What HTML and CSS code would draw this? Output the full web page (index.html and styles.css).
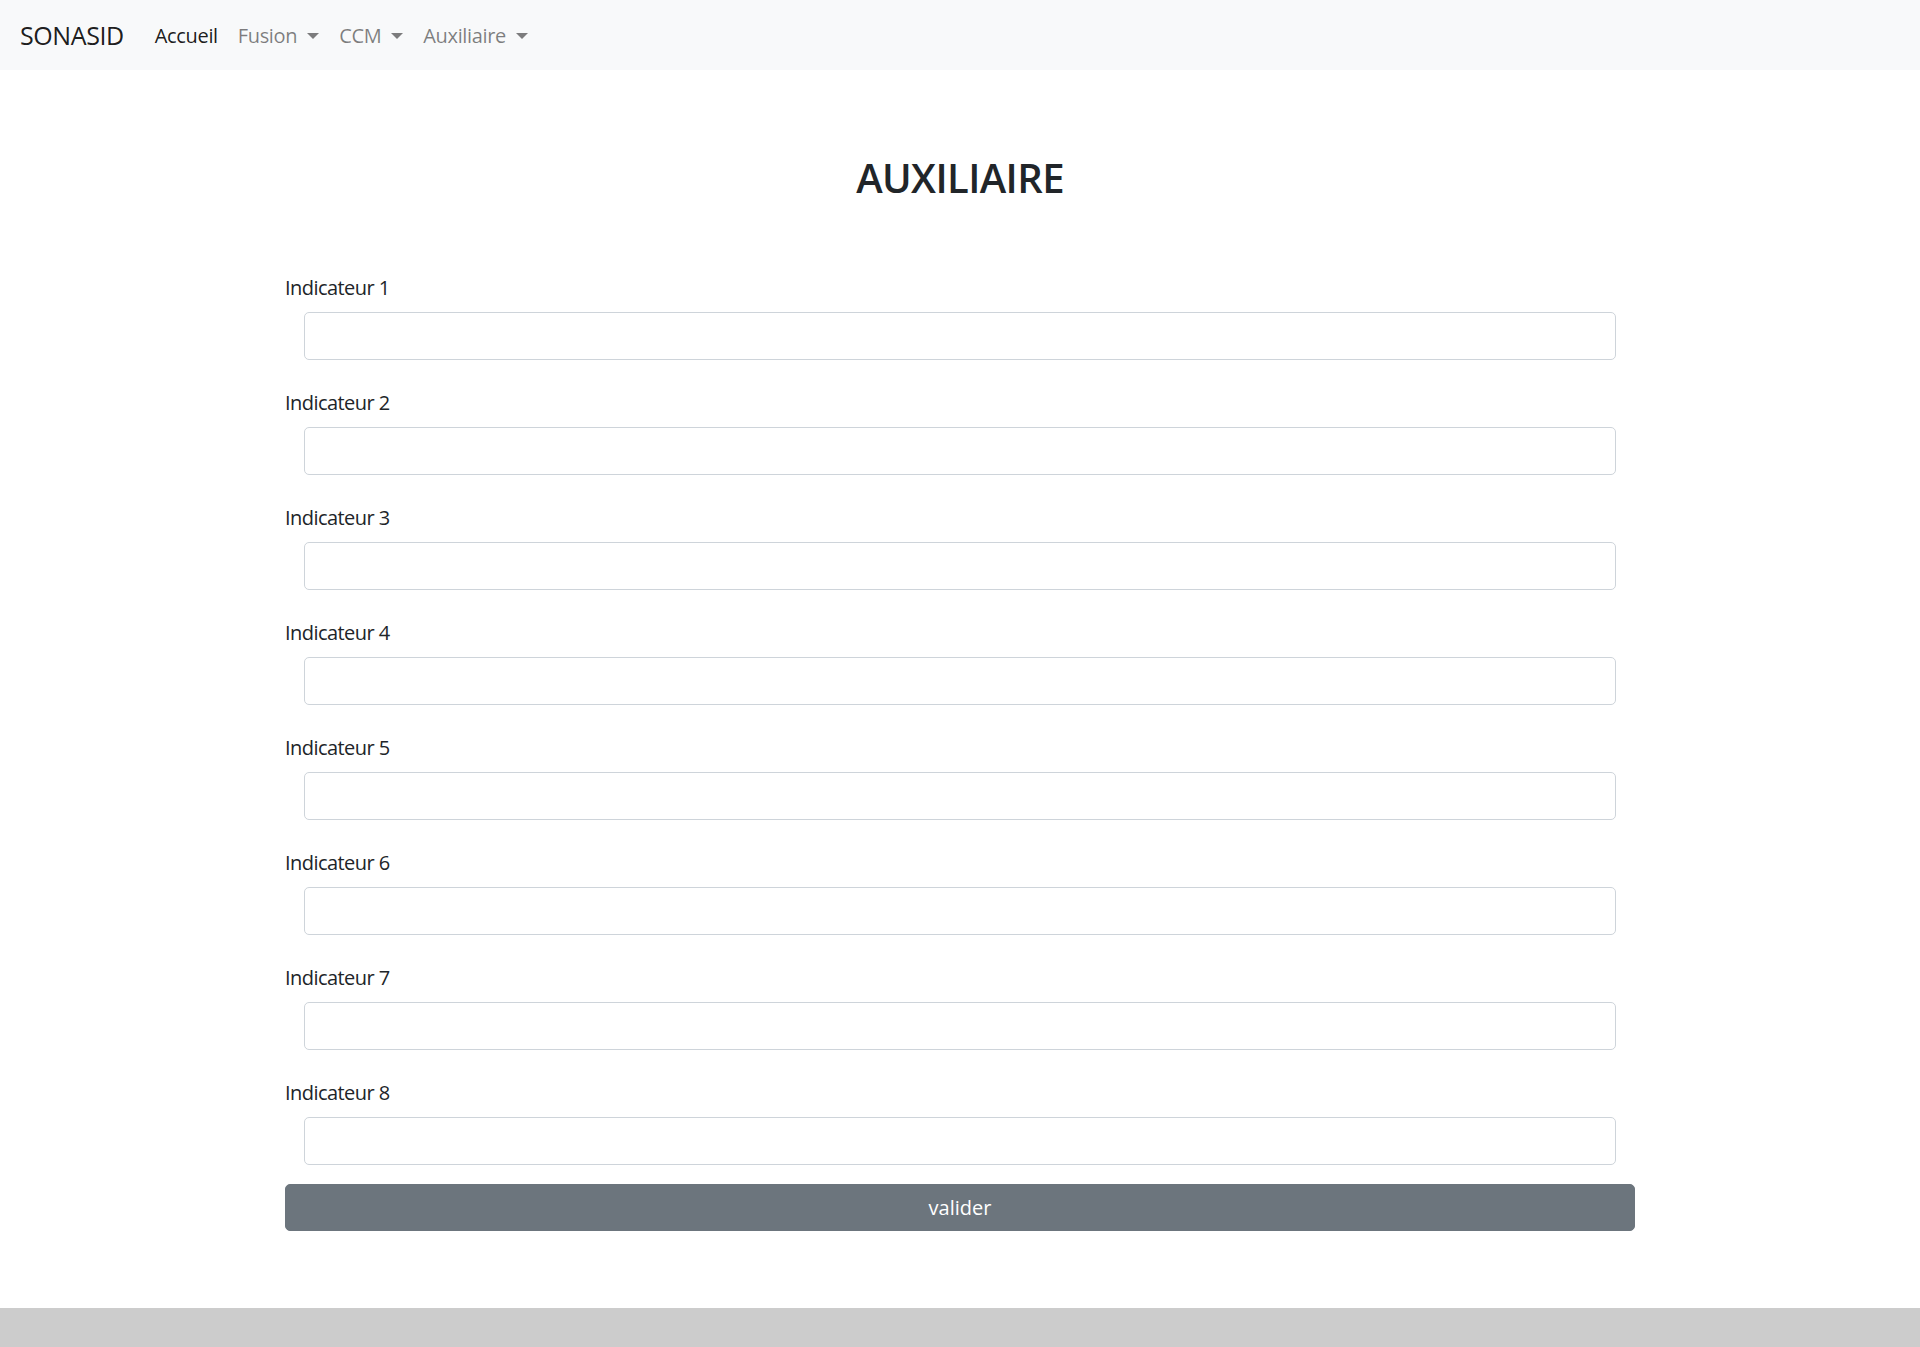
FILE: index.html
```html
<!DOCTYPE html>
<html lang="fr">
<head>
<meta charset="utf-8">
<title>SONASID - Auxiliaire</title>
<link rel="stylesheet" href="styles.css">
</head>
<body>
<nav class="navbar">
  <a class="brand" href="#">SONASID</a>
  <ul class="nav">
    <li><a class="nav-link active" href="#">Accueil</a></li>
    <li><a class="nav-link toggle" href="#">Fusion</a></li>
    <li><a class="nav-link toggle" href="#">CCM</a></li>
    <li><a class="nav-link toggle" href="#">Auxiliaire</a></li>
  </ul>
</nav>
<main class="container">
  <h2 class="title">AUXILIAIRE</h2>
  <form class="form">
    <div class="group"><label class="label">Indicateur 1</label><div class="field"><input class="input" type="text"></div></div>
    <div class="group"><label class="label">Indicateur 2</label><div class="field"><input class="input" type="text"></div></div>
    <div class="group"><label class="label">Indicateur 3</label><div class="field"><input class="input" type="text"></div></div>
    <div class="group"><label class="label">Indicateur 4</label><div class="field"><input class="input" type="text"></div></div>
    <div class="group"><label class="label">Indicateur 5</label><div class="field"><input class="input" type="text"></div></div>
    <div class="group"><label class="label">Indicateur 6</label><div class="field"><input class="input" type="text"></div></div>
    <div class="group"><label class="label">Indicateur 7</label><div class="field"><input class="input" type="text"></div></div>
    <div class="group last"><label class="label">Indicateur 8</label><div class="field"><input class="input" type="text"></div></div>
    <button class="btn" type="button">valider</button>
  </form>
</main>
<footer class="footer"></footer>
</body>
</html>
```
FILE: styles.css
```css
* { box-sizing: border-box; }
html, body { margin: 0; padding: 0; }
body {
  font-family: "Open Sans", "Noto Sans", sans-serif;
  font-size: 20px;
  line-height: 1.5;
  letter-spacing: -0.55px;
  color: #212529;
  background: #fff;
  height: 1347px;
  display: flex;
  flex-direction: column;
}
.navbar {
  height: 70px;
  background: #f8f9fa;
  display: flex;
  align-items: center;
  padding: 2px 20px 0;
}
.brand {
  font-size: 25px;
  letter-spacing: -0.4px;
  color: rgba(0,0,0,.9);
  text-decoration: none;
  margin-right: 21px;
  line-height: 1.5;
}
.nav {
  list-style: none;
  margin: 0;
  padding: 0;
  display: flex;
}
.nav-link {
  display: block;
  padding: 10px 10px;
  letter-spacing: -0.35px;
  color: rgba(0,0,0,.5);
  text-decoration: none;
}
.nav-link.active { color: rgba(0,0,0,.9); }
.toggle::after {
  content: "";
  display: inline-block;
  margin-left: 10px;
  vertical-align: 4px;
  border-top: 6px solid;
  border-left: 6px solid transparent;
  border-right: 6px solid transparent;
}
.container {
  width: 1350px;
  margin: 0 auto;
  flex: 1;
}
.title {
  margin: 84px 0 71px;
  text-align: center;
  font-size: 40px;
  line-height: 48px;
  font-weight: 600;
  letter-spacing: -0.6px;
  color: #212529;
}
.group { margin-bottom: 28.5px; }
.group.last { margin-bottom: 19px; }
.label {
  display: block;
  margin-bottom: 9px;
}
.field { padding: 0 19px; }
.input {
  display: block;
  width: 100%;
  height: 47.5px;
  border: 1px solid #ced4da;
  border-radius: 5px;
  background: #fff;
  font: inherit;
  padding: 0 15px;
}
.btn {
  display: block;
  width: 100%;
  height: 47.5px;
  background: #6c757d;
  color: #fff;
  border: 1px solid #6c757d;
  border-radius: 5px;
  font: inherit;
  padding-top: 2px;
  cursor: pointer;
}
.footer {
  height: 39px;
  background: #cccccc;
}
```
